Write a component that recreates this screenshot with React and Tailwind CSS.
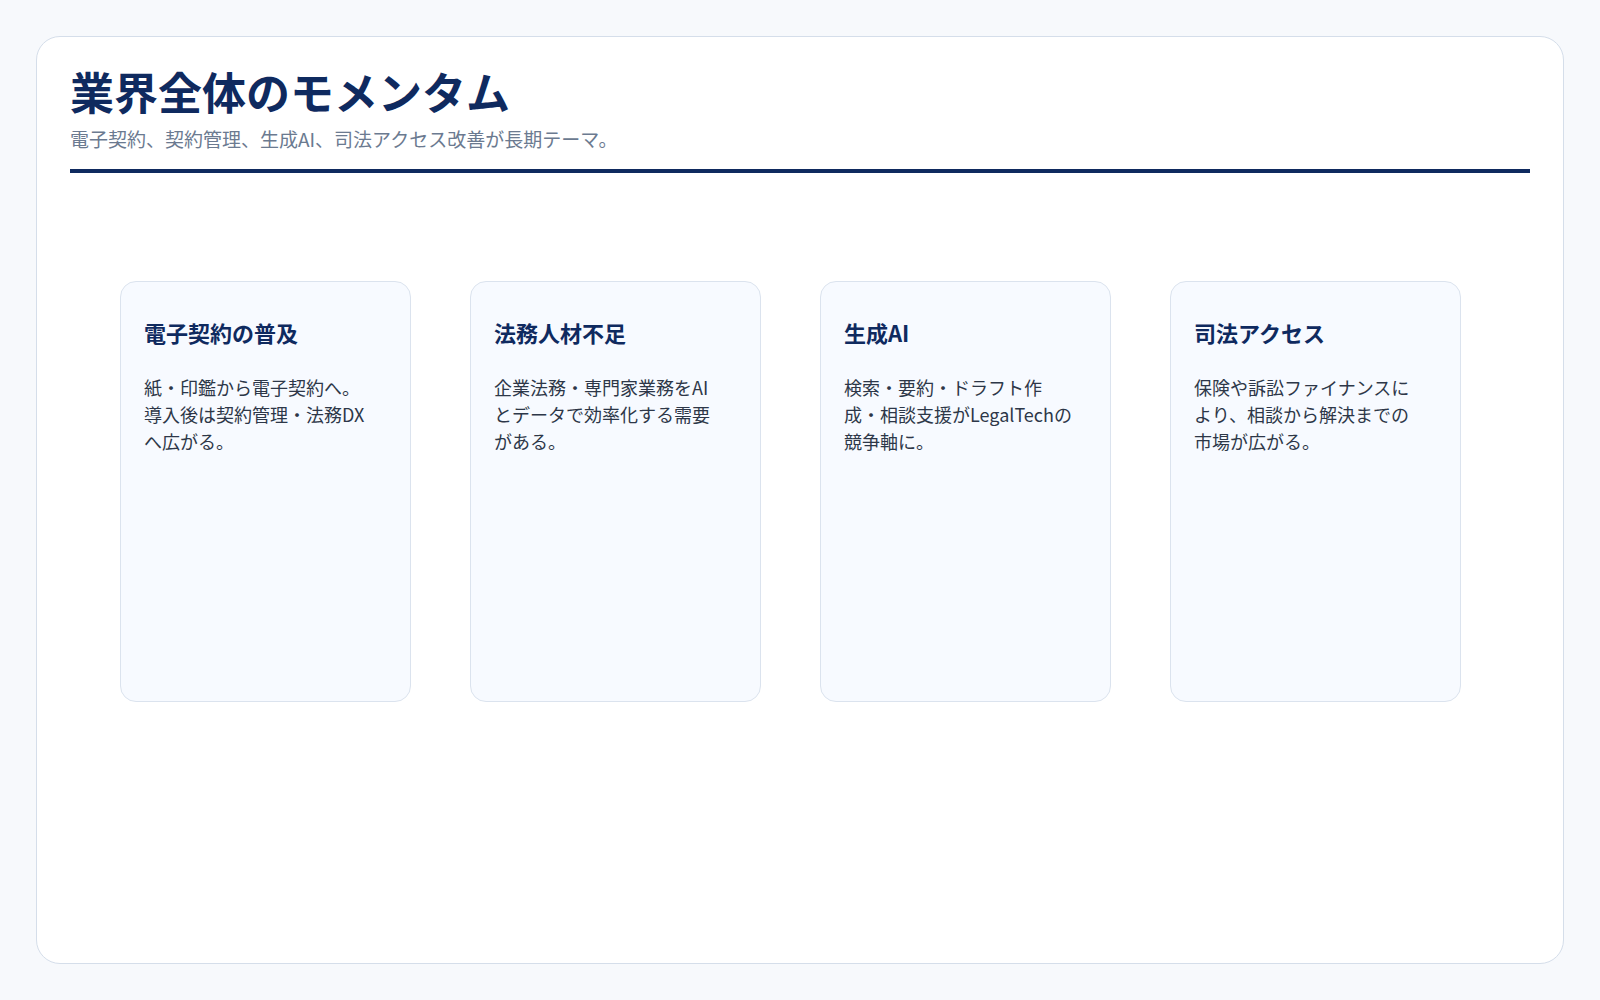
const cards = [
  { title: '電子契約の普及', body: '紙・印鑑から電子契約へ。導入後は契約管理・法務DXへ広がる。' },
  { title: '法務人材不足', body: '企業法務・専門家業務をAIとデータで効率化する需要がある。' },
  { title: '生成AI', body: '検索・要約・ドラフト作成・相談支援がLegalTechの競争軸に。' },
  { title: '司法アクセス', body: '保険や訴訟ファイナンスにより、相談から解決までの市場が広がる。' },
];

export default function App() {
  return (
    <div
      className="w-[1600px] h-[1000px] bg-[#f7f9fc] p-[36px]"
      style={{ fontFamily: '"Noto Sans CJK JP", "Noto Sans", sans-serif' }}
    >
      <div className="h-full bg-white border border-[#d5deea] rounded-[24px] px-[33px] pt-[24px]">
        <h1 className="text-[44px] leading-[60px] font-bold text-[#0f2a5f]">業界全体のモメンタム</h1>
        <p className="text-[19px] leading-[28px] text-[#6b7a90] mt-[4px]">
          電子契約、契約管理、生成AI、司法アクセス改善が長期テーマ。
        </p>
        <div className="h-[4px] bg-[#0f2a5f] mt-[16px]" />
        <div className="flex gap-[59px] pl-[50px] mt-[108px]">
          {cards.map((c) => (
            <div
              key={c.title}
              className="w-[291px] h-[421px] bg-[#f7faff] border border-[#dbe3ee] rounded-[16px] pl-[23px] pr-[36px] pt-[34px]"
            >
              <h3 className="text-[22px] leading-[32px] font-bold text-[#0f2a5f]">{c.title}</h3>
              <p className="text-[18px] leading-[27px] text-[#2d3748] mt-[26px]">{c.body}</p>
            </div>
          ))}
        </div>
      </div>
    </div>
  );
}
